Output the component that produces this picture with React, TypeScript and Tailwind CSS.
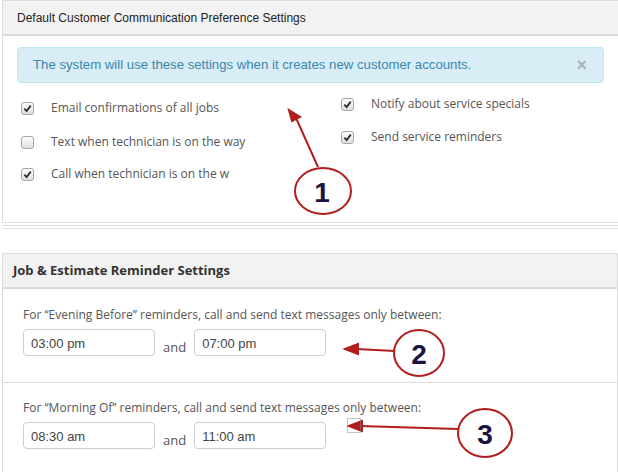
import React from "react";

const Check = ({ checked }: { checked: boolean }) => (
  <span className="w-[13px] h-[13px] rounded-[3px] border border-[#a6a6a6] bg-gradient-to-b from-[#fdfdfd] to-[#dedede] flex items-center justify-center shrink-0">
    {checked && (
      <svg width="9" height="9" viewBox="0 0 10 10">
        <path d="M1.5 5.2 L4 7.8 L8.6 1.8" fill="none" stroke="#2d2d2d" strokeWidth="2" />
      </svg>
    )}
  </span>
);

const Option = ({ label, checked, className }: { label: string; checked: boolean; className?: string }) => (
  <div className={`flex items-center h-[20px] ${className ?? ""}`}>
    <Check checked={checked} />
    <span className="ml-[17px] text-[12px] text-[#555] whitespace-nowrap">{label}</span>
  </div>
);

const TimeInput = ({ value }: { value: string }) => (
  <div className="w-[132px] h-[27px] border border-[#cfcfcf] rounded-[4px] bg-white pl-[7px] pt-[4px] text-[13px] text-[#444] font-['Liberation_Sans',Arial,sans-serif]">
    {value}
  </div>
);

const TimeRow = ({ text, from, to }: { text: string; from: string; to: string }) => (
  <div className="pl-[20px]">
    <div className="text-[12px] text-[#555] leading-[16px]">{text}</div>
    <div className="flex items-end mt-[6px]">
      <TimeInput value={from} />
      <span className="mx-[8px] text-[13px] text-[#555] leading-[18px]">and</span>
      <TimeInput value={to} />
    </div>
  </div>
);

export default function App() {
  return (
    <div className="relative w-[618px] h-[472px] overflow-hidden bg-white font-['Open_Sans',sans-serif]">
      {/* panel 1 */}
      <div className="ml-[2px] w-[620px] border border-[#dcdcdc] bg-white shadow-[0_2px_0_#fff,0_3px_0_#dcdcdc,0_5px_0_#fff,0_6px_0_#e2e2e2]">
        <div className="h-[35px] bg-[#f2f2f2] border-b-2 border-[#dadada] flex items-center pl-[14px] text-[12px] text-[#222] font-['Liberation_Sans',Arial,sans-serif]">
          Default Customer Communication Preference Settings
        </div>
        <div className="pt-[11px] pb-[38px]">
          <div className="ml-[14px] w-[587px] h-[36px] bg-[#d9edf7] border border-[#bce8f1] rounded-[4px] flex items-center justify-between pl-[15px] pr-[16px] text-[13.2px] text-[#3a87ad] font-['Liberation_Sans',Arial,sans-serif]">
            <span>The system will use these settings when it creates new customer accounts.</span>
            <span className="text-[18px] font-bold text-[#a9b4ba] leading-none">×</span>
          </div>
          <div className="flex">
            <div className="w-[320px] pl-[18px] pt-[15px]">
              <Option label="Email confirmations of all jobs" checked />
              <Option label="Text when technician is on the way" checked={false} className="mt-[14px]" />
              <Option label="Call when technician is on the w" checked className="mt-[12px]" />
            </div>
            <div className="pl-[18px] pt-[11px]">
              <Option label="Notify about service specials" checked />
              <Option label="Send service reminders" checked className="mt-[13px]" />
            </div>
          </div>
        </div>
      </div>

      {/* panel 2 */}
      <div className="ml-[2px] mt-[30px] w-[616px] border border-[#dcdcdc] bg-white h-[240px]">
        <div className="h-[35px] bg-[#f2f2f2] border-b-2 border-[#dadada] flex items-center pl-[10px] text-[13px] font-bold text-[#333]">
          Job &amp; Estimate Reminder Settings
        </div>
        <div className="pt-[18px] pb-[26px] border-b border-[#dcdcdc]">
          <TimeRow text="For “Evening Before” reminders, call and send text messages only between:" from="03:00 pm" to="07:00 pm" />
        </div>
        <div className="pt-[17px]">
          <TimeRow text="For “Morning Of” reminders, call and send text messages only between:" from="08:30 am" to="11:00 am" />
        </div>
      </div>

      {/* annotations */}
      <svg className="absolute left-0 top-0 pointer-events-none" width="618" height="472">
        <g stroke="#b01e1e" strokeWidth="2" fill="none">
          <line x1="318" y1="167" x2="296" y2="118" />
          <path d="M289 110 L300 117 L292 121 Z" fill="#b01e1e" />
          <ellipse cx="323" cy="191" rx="28" ry="23" />
          <line x1="395" y1="351" x2="356" y2="349" />
          <path d="M345 349 L358 344 L358 354 Z" fill="#b01e1e" />
          <ellipse cx="419" cy="353" rx="25" ry="23" />
          <line x1="458" y1="429" x2="360" y2="426" />
          <path d="M349 426 L362 421 L362 431 Z" fill="#b01e1e" />
          <ellipse cx="485" cy="433" rx="27" ry="24" />
        </g>
        <rect x="347.5" y="418.5" width="13" height="14" fill="none" stroke="#888" strokeWidth="1" strokeDasharray="1 1" />
        <g fill="#1b1440" fontFamily="Liberation Sans, Arial, sans-serif" fontWeight="bold" fontSize="28" textAnchor="middle">
          <text x="322" y="202">1</text>
          <text x="419" y="364">2</text>
          <text x="485" y="444">3</text>
        </g>
      </svg>
    </div>
  );
}
